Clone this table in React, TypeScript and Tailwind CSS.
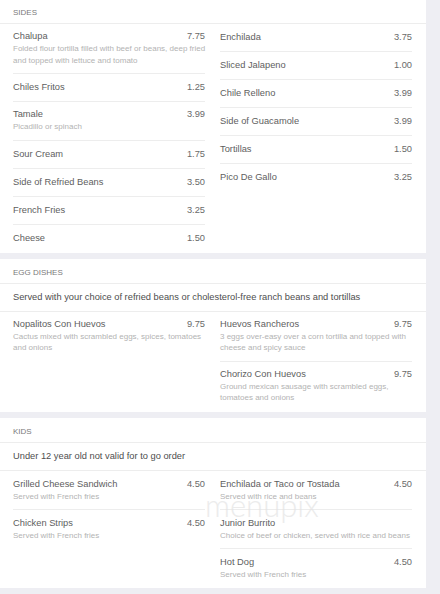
import React from "react";

type Item = { name: string; price?: string; desc?: string[] };

function Row({ item, last, tall }: { item: Item; last: boolean; tall?: boolean }) {
  const hasDesc = !!item.desc && item.desc.length > 0;
  return (
    <div
      className={
        (last ? "" : "border-b border-[#ededed] ") +
        (hasDesc ? (tall ? "pt-[6px] pb-[6.8px]" : "pt-[5px] pb-[7px]") : "pt-[7px] pb-[7px]")
      }
    >
      <div
        className={
          "flex justify-between text-[9.3px] text-[#5e5e5e] " +
          (hasDesc ? "leading-[14px]" : "leading-[13px]")
        }
      >
        <span>{item.name}</span>
        {item.price && <span className="text-[#6a6a6a]">{item.price}</span>}
      </div>
      {hasDesc &&
        item.desc!.map((d, i) => (
          <div
            key={i}
            className="text-[8px] leading-[11.5px] text-[#b3b3b3] whitespace-nowrap"
          >
            {d}
          </div>
        ))}
    </div>
  );
}

function Column({ items, tall }: { items: Item[]; tall?: boolean }) {
  return (
    <div className="flex flex-col">
      {items.map((it, i) => (
        <Row key={i} item={it} last={i === items.length - 1} tall={tall} />
      ))}
    </div>
  );
}

function Card({
  title,
  note,
  left,
  right,
  tall,
}: {
  title: string;
  note?: string;
  left: Item[];
  right: Item[];
  tall?: boolean;
}) {
  return (
    <div className="bg-white pb-[1px]">
      <div className="pl-[13px] pt-[8px] pb-[4px] leading-[12px] text-[8px] text-[#7a7a7a] border-b border-[#ededed]">
        {title}
      </div>
      {note && (
        <div className="pl-[13px] pt-[7px] pb-[7px] leading-[13px] text-[9.3px] text-[#4e4e4e] border-b border-[#ededed]">
          {note}
        </div>
      )}
      <div className="grid grid-cols-[192px_192px] gap-x-[15px] pl-[13px] pr-[14px]">
        <Column items={left} tall={tall} />
        <Column items={right} tall={tall} />
      </div>
    </div>
  );
}

const sidesLeft: Item[] = [
  {
    name: "Chalupa",
    price: "7.75",
    desc: [
      "Folded flour tortilla filled with beef or beans, deep fried",
      "and topped with lettuce and tomato",
    ],
  },
  { name: "Chiles Fritos", price: "1.25" },
  { name: "Tamale", price: "3.99", desc: ["Picadillo or spinach"] },
  { name: "Sour Cream", price: "1.75" },
  { name: "Side of Refried Beans", price: "3.50" },
  { name: "French Fries", price: "3.25" },
  { name: "Cheese", price: "1.50" },
];

const sidesRight: Item[] = [
  { name: "Enchilada", price: "3.75" },
  { name: "Sliced Jalapeno", price: "1.00" },
  { name: "Chile Relleno", price: "3.99" },
  { name: "Side of Guacamole", price: "3.99" },
  { name: "Tortillas", price: "1.50" },
  { name: "Pico De Gallo", price: "3.25" },
];

const eggLeft: Item[] = [
  {
    name: "Nopalitos Con Huevos",
    price: "9.75",
    desc: ["Cactus mixed with scrambled eggs, spices, tomatoes", "and onions"],
  },
];

const eggRight: Item[] = [
  {
    name: "Huevos Rancheros",
    price: "9.75",
    desc: [
      "3 eggs over-easy over a corn tortilla and topped with",
      "cheese and spicy sauce",
    ],
  },
  {
    name: "Chorizo Con Huevos",
    price: "9.75",
    desc: ["Ground mexican sausage with scrambled eggs,", "tomatoes and onions"],
  },
];

const kidsLeft: Item[] = [
  { name: "Grilled Cheese Sandwich", price: "4.50", desc: ["Served with French fries"] },
  { name: "Chicken Strips", price: "4.50", desc: ["Served with French fries"] },
];

const kidsRight: Item[] = [
  { name: "Enchilada or Taco or Tostada", price: "4.50", desc: ["Served with rice and beans"] },
  {
    name: "Junior Burrito",
    desc: ["Choice of beef or chicken, served with rice and beans"],
  },
  { name: "Hot Dog", price: "4.50", desc: ["Served with French fries"] },
];

export default function App() {
  return (
    <div className="relative w-[440px] h-[594px] overflow-hidden bg-[#eeeef3] font-['Liberation_Sans',Arial,sans-serif]">
      <div className="w-[426px] flex flex-col gap-[6px] mt-[-1px]">
        <Card title="SIDES" left={sidesLeft} right={sidesRight} />
        <Card
          title="EGG DISHES"
          note="Served with your choice of refried beans or cholesterol-free ranch beans and tortillas"
          left={eggLeft}
          right={eggRight}
        />
        <Card
          title="KIDS"
          note="Under 12 year old not valid for to go order"
          left={kidsLeft}
          right={kidsRight}
          tall
        />
      </div>
      <div className="absolute left-[205px] top-[490px] text-[31px] leading-[31px] font-['Lato',sans-serif] font-light text-[#e4e4e4] opacity-70 pointer-events-none select-none">
        menupix
      </div>
    </div>
  );
}
